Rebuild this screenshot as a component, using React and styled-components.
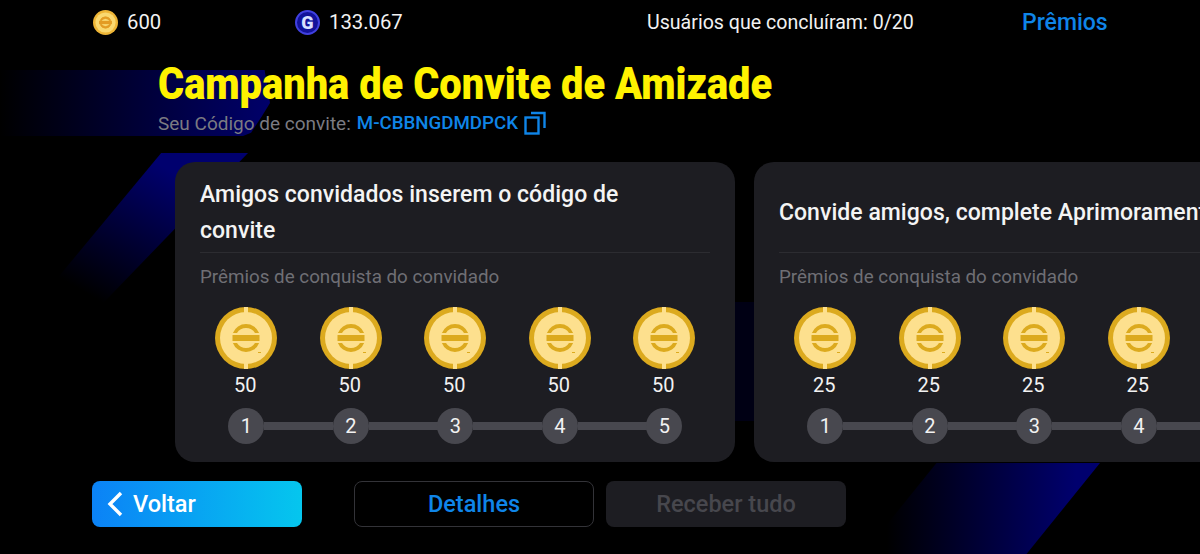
import React from 'react';
import styled, { createGlobalStyle } from 'styled-components';

const campaigns = [
    { title: 'Amigos convidados inserem o código de\nconvite', amount: 50 },
    { title: 'Convide amigos, complete Aprimoramentos', amount: 25 },
];
const steps = [1, 2, 3, 4, 5];

const TOP_ARC = 'M17.9 26 A14 14 0 0 1 44.1 26 L40 26 A10.5 10.5 0 0 0 22 26 Z';
const BOTTOM_ARC = 'M17.9 36 A14 14 0 0 0 44.1 36 L40 36 A10.5 10.5 0 0 1 22 36 Z';

function GoldCoin() {
    return (
        <RewardCoin viewBox="0 0 62 62">
            <circle cx="31" cy="31" r="31" fill="#dcaa1e" />
            <circle cx="31" cy="31" r="26" fill="#fde08e" />
            <rect x="29" y="0" width="4" height="6" fill="#fde08e" />
            <rect x="29" y="56" width="4" height="6" fill="#fde08e" />
            <rect x="17.5" y="28" width="27" height="6" fill="#dcaa1e" />
            <path d={TOP_ARC} fill="#dcaa1e" />
            <path d={BOTTOM_ARC} fill="#dcaa1e" />
            <rect x="43" y="45" width="3" height="1" fill="#dcaa1e" />
        </RewardCoin>
    );
}

function SmallCoin() {
    return (
        <TopIcon viewBox="0 0 62 62">
            <circle cx="31" cy="31" r="31" fill="#eeb536" />
            <circle cx="31" cy="31" r="25" fill="#f9d870" />
            <rect x="15" y="27" width="32" height="8" fill="#e39c24" />
            <path d={TOP_ARC} fill="#e39c24" stroke="#e39c24" strokeWidth="2" />
            <path d={BOTTOM_ARC} fill="#e39c24" stroke="#e39c24" strokeWidth="2" />
        </TopIcon>
    );
}

function App() {
    return (
        <Page>
            <GlobalStyle />
            <BackdropTop />
            <BackdropLeft />
            <BackdropMiddle />
            <BackdropBottom />

            <TopBar>
                <Balance><SmallCoin />600</Balance>
                <Balance><BlueCoin>G</BlueCoin>133.067</Balance>
                <Progress>Usuários que concluíram: 0/20</Progress>
                <PrizeLink>Prêmios</PrizeLink>
            </TopBar>

            <Heading>
                <Title>Campanha de Convite de Amizade</Title>
                <InviteRow>
                    Seu Código de convite:
                    <InviteCode>M-CBBNGDMDPCK</InviteCode>
                    <CopyIcon viewBox="0 0 22 24" fill="none" stroke="#0f85e8" strokeWidth="2.4">
                        <rect x="1.5" y="6.5" width="13" height="16" />
                        <path d="M7 2 H20.5 V17" />
                    </CopyIcon>
                </InviteRow>
            </Heading>

            <Cards>
                {campaigns.map(c => (
                    <Card key={c.amount}>
                        <CardHeader>{c.title}</CardHeader>
                        <CardLabel>Prêmios de conquista do convidado</CardLabel>
                        <Rewards>
                            {steps.map(s => (
                                <Reward key={s}>
                                    <GoldCoin />
                                    <Amount>{c.amount}</Amount>
                                    <Step>{s}</Step>
                                </Reward>
                            ))}
                        </Rewards>
                    </Card>
                ))}
            </Cards>

            <Footer>
                <BackButton>
                    <svg width="18" height="26" viewBox="0 0 18 26" fill="none" stroke="#fff" strokeWidth="3.4">
                        <path d="M15 2 L4 13 L15 24" />
                    </svg>
                    Voltar
                </BackButton>
                <DetailsButton>Detalhes</DetailsButton>
                <ClaimButton>Receber tudo</ClaimButton>
            </Footer>
        </Page>
    );
}

export default App;

const GlobalStyle = createGlobalStyle`
    body {
        margin: 0;
        background: #000;
        font-family: Roboto, "Noto Sans", sans-serif;
    }
`;

const Page = styled.div`
    position: relative;
    width: 1200px;
    height: 554px;
    overflow: hidden;
    background: #000;
    color: #fff;
`;

const BackdropTop = styled.div`
    position: absolute;
    left: 0;
    top: 70px;
    width: 270px;
    height: 66px;
    background: linear-gradient(90deg, #000 0%, #00006a 100%);
    clip-path: polygon(0 0, 98% 0, 100% 50%, 97% 70%, 93% 95%, 90% 100%, 0 100%);
`;

const BackdropLeft = styled.div`
    position: absolute;
    left: 55px;
    top: 153px;
    width: 193px;
    height: 200px;
    background: linear-gradient(30deg, #000 25%, #00006e 80%);
    clip-path: polygon(55% 0, 100% 0, 0 100%, 0 64%);
`;

const BackdropMiddle = styled.div`
    position: absolute;
    left: 735px;
    top: 302px;
    width: 20px;
    height: 119px;
    background: #000014;
`;

const BackdropBottom = styled.div`
    position: absolute;
    left: 863px;
    top: 463px;
    width: 237px;
    height: 91px;
    background: linear-gradient(90deg, #000 10%, #00006e 90%);
    clip-path: polygon(31% 0, 100% 0, 69% 100%, 0 100%);
`;

const TopBar = styled.div`
    position: relative;
    display: grid;
    grid-template-columns: 202px 352px 375px auto;
    align-items: center;
    height: 44px;
    padding-left: 93px;
`;

const Balance = styled.div`
    display: flex;
    align-items: center;
    gap: 9px;
    font-size: 20.3px;
    color: #f2f2f2;
`;

const Progress = styled.div`
    font-size: 19.6px;
    color: #f2f2f2;
`;

const TopIcon = styled.svg`
    width: 25px;
    height: 25px;
`;

const BlueCoin = styled.span`
    display: flex;
    align-items: center;
    justify-content: center;
    box-sizing: border-box;
    width: 25px;
    height: 25px;
    border-radius: 50%;
    border: 2px solid #4040e0;
    background: #12129a;
    font-size: 18px;
    font-weight: 900;
    color: #d8e0ff;
`;

const PrizeLink = styled.div`
    font-size: 23px;
    font-weight: 500;
    color: #0f85e8;
`;

const Heading = styled.div`
    position: relative;
    padding: 14px 0 0 158px;
`;

const Title = styled.h1`
    margin: 0;
    height: 52px;
    font-size: 44px;
    line-height: 52px;
    font-weight: 900;
    color: #fff200;
    white-space: nowrap;
    transform: scaleX(0.905);
    transform-origin: left center;
`;

const InviteRow = styled.div`
    display: flex;
    align-items: center;
    height: 26px;
    font-size: 19px;
    color: #7b7b82;
`;

const InviteCode = styled.span`
    margin-left: 6px;
    font-size: 18.7px;
    color: #0f85e8;
    font-weight: 500;
`;

const CopyIcon = styled.svg`
    width: 22px;
    height: 24px;
    margin-left: 6px;
`;

const Cards = styled.div`
    position: relative;
    display: flex;
    gap: 19px;
    margin-top: 26px;
    padding-left: 175px;
`;

const Card = styled.div`
    flex: 0 0 560px;
    min-width: 0;
    box-sizing: border-box;
    height: 300px;
    padding: 0 25px;
    border-radius: 20px;
    background: #1d1d22;
`;

const CardHeader = styled.div`
    display: flex;
    align-items: center;
    height: 91px;
    box-sizing: border-box;
    padding-top: 11px;
    border-bottom: 1px solid #2c2c31;
    font-size: 23px;
    line-height: 36px;
    font-weight: 500;
    letter-spacing: 0.03px;
    color: #f4f4f4;
    white-space: pre;
`;

const CardLabel = styled.div`
    margin-top: 12px;
    font-size: 18.8px;
    line-height: 24px;
    color: #6f6f75;
`;

const Rewards = styled.div`
    display: flex;
    margin: 18px 0 0 -6px;
`;

const Reward = styled.div`
    flex: 0 0 104.5px;
    display: flex;
    flex-direction: column;
    align-items: center;
`;

const RewardCoin = styled.svg`
    width: 62px;
    height: 62px;
`;

const Amount = styled.div`
    margin-top: 4px;
    padding-right: 2px;
    font-size: 20px;
    line-height: 24px;
    color: #f2f2f2;
`;

const Step = styled.div`
    position: relative;
    display: flex;
    align-items: center;
    justify-content: center;
    width: 36px;
    height: 36px;
    margin-top: 11px;
    border-radius: 50%;
    background: #48484f;
    font-size: 20px;
    color: #f2f2f2;

    ${Reward}:not(:last-child) &::after {
        content: '';
        position: absolute;
        left: 36px;
        top: 14px;
        width: 69px;
        height: 8px;
        background: #48484f;
    }
`;

const Footer = styled.div`
    position: relative;
    display: flex;
    align-items: center;
    margin-top: 19px;
    padding-left: 92px;
`;

const FooterButton = styled.div`
    display: flex;
    align-items: center;
    box-sizing: border-box;
    height: 46px;
    border-radius: 8px;
    font-size: 23.5px;
    font-weight: 500;
`;

const BackButton = styled(FooterButton)`
    width: 210px;
    gap: 9px;
    padding-left: 14px;
    background: linear-gradient(90deg, #0b82f6 0%, #05c6ee 100%);
    color: #fff;
`;

const DetailsButton = styled(FooterButton)`
    width: 240px;
    margin-left: 52px;
    justify-content: center;
    border: 1.5px solid #333338;
    color: #0f85e8;
`;

const ClaimButton = styled(FooterButton)`
    width: 240px;
    margin-left: 12px;
    justify-content: center;
    background: #1d1d22;
    color: #47474d;
`;
